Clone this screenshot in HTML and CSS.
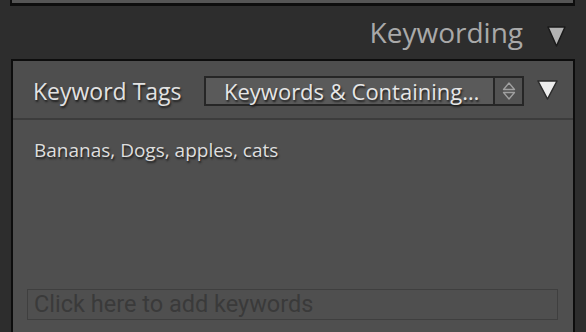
FILE: index.html
```html
<!DOCTYPE html>
<html>
<head>
<meta charset="utf-8">
<link rel="stylesheet" href="styles.css">
</head>
<body>
<div class="app">
  <div class="prev-panel"></div>
  <div class="section-title">
    <span class="section-name">Keywording</span>
    <svg class="section-tri" width="19" height="21" viewBox="0 0 19 21"><polygon points="1,1 18,1 9.5,20" fill="#b3b3b3" stroke="#1a1a1a" stroke-width="1.5" stroke-linejoin="round"/></svg>
  </div>
  <div class="panel">
    <div class="panel-head">
      <span class="head-label">Keyword Tags</span>
      <div class="select">
        <span class="select-value">Keywords &amp; Containing…</span>
      </div>
      <div class="spinner">
        <svg width="14" height="20" viewBox="0 0 14 20"><polygon points="7,2 12.5,8.5 1.5,8.5" fill="none" stroke="#a0a0a0" stroke-width="1.3" stroke-linejoin="round"/><polygon points="1.5,11.5 12.5,11.5 7,18" fill="none" stroke="#a0a0a0" stroke-width="1.3" stroke-linejoin="round"/></svg>
      </div>
      <svg class="head-tri" width="21" height="20" viewBox="0 0 21 20"><polygon points="1,1 20,1 10.5,19" fill="#ececec" stroke="#2a2a2a" stroke-width="1.5" stroke-linejoin="round"/></svg>
    </div>
    <div class="panel-body">
      <p class="tags">Bananas, Dogs, apples, cats</p>
      <div class="add-box">Click here to add keywords</div>
    </div>
  </div>
</div>
</body>
</html>
```
FILE: styles.css
```css
html, body {
  margin: 0;
  padding: 0;
  background: #2d2d2d;
  width: 586px;
  height: 332px;
  overflow: hidden;
}
.app {
  display: flex;
  flex-direction: column;
  height: 332px;
  font-family: "Open Sans", "Noto Sans", sans-serif;
}
.prev-panel {
  margin-left: 10px;
  width: 561px;
  height: 3px;
  flex: none;
  background: #555555;
  border: 2px solid #0d0d0d;
  border-top: none;
  border-bottom-width: 3px;
}
.section-title {
  height: 53px;
  flex: none;
  display: flex;
  align-items: center;
  justify-content: flex-end;
  padding-right: 20px;
  gap: 24px;
}
.section-name {
  font-size: 28px;
  color: #a9a9a9;
  line-height: 1;
  margin-top: -1px;
}
.section-tri {
  display: block;
  margin-top: 8px;
}
.panel {
  margin-left: 11px;
  width: 560px;
  flex: 1;
  min-height: 0;
  border: 2px solid #0d0d0d;
  border-bottom: none;
  background: #4f4f4f;
  display: flex;
  flex-direction: column;
}
.panel-head {
  flex: none;
  display: flex;
  align-items: center;
  padding-left: 20px;
  border-bottom: 2px solid #3c3c3c;
  box-sizing: border-box;
  height: 59px;
  background: #4e4e4e;
}
.head-label {
  font-size: 23px;
  color: #e2e2e2;
  text-shadow: 1px 2px 2px #1e1e1e;
  width: 171px;
  white-space: nowrap;
  margin-top: 2px;
}
.select {
  width: 269px;
  height: 26px;
  border: 2px solid #262626;
  background: #5a5a5a;
  display: flex;
  align-items: center;
  padding-left: 18px;
  margin-top: 2px;
}
.select-value {
  font-size: 22px;
  color: #e6e6e6;
  text-shadow: 1px 2px 2px #1e1e1e;
  white-space: nowrap;
}
.spinner {
  width: 27px;
  height: 26px;
  border: 2px solid #262626;
  border-left: none;
  background: #525252;
  display: flex;
  align-items: center;
  justify-content: center;
  margin-top: 2px;
}
.spinner svg { display: block; }
.head-tri {
  display: block;
  margin-left: 13px;
  margin-top: 0px;
}
.panel-body {
  flex: 1;
  min-height: 0;
  display: flex;
  flex-direction: column;
  padding: 0 14px;
  overflow: hidden;
}
.tags {
  margin: 17px 0 0 7px;
  font-size: 19px;
  color: #dedede;
  text-shadow: 1px 2px 2px #1e1e1e;
  line-height: 26px;
}
.add-box {
  flex: none;
  margin-top: 126px;
  height: 29px;
  border: 1px solid #3f3f3f;
  font-family: "Roboto", "Liberation Sans", sans-serif;
  font-size: 23.5px;
  line-height: 29px;
  color: #3a3a3a;
  padding-left: 6px;
  width: 523px;
}
```
